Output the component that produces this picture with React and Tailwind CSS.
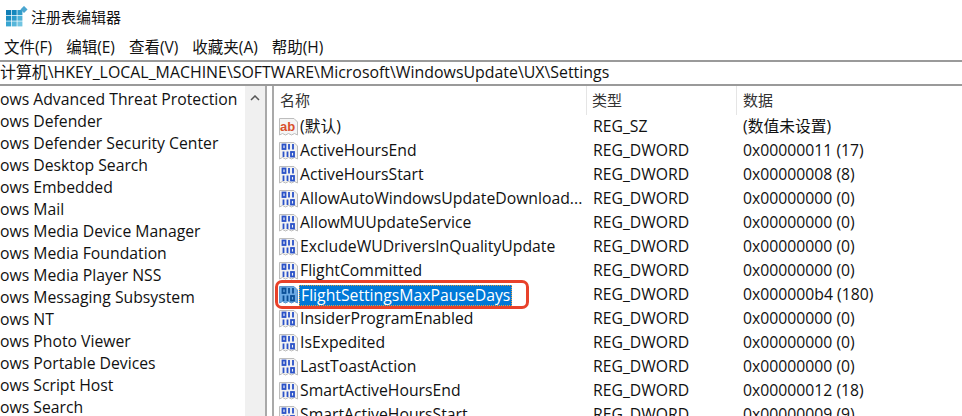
const FONT = "font-['Open_Sans','Noto_Sans_CJK_SC',sans-serif]"

const treeItems = [
  'ows Advanced Threat Protection',
  'ows Defender',
  'ows Defender Security Center',
  'ows Desktop Search',
  'ows Embedded',
  'ows Mail',
  'ows Media Device Manager',
  'ows Media Foundation',
  'ows Media Player NSS',
  'ows Messaging Subsystem',
  'ows NT',
  'ows Photo Viewer',
  'ows Portable Devices',
  'ows Script Host',
  'ows Search',
]

const values = [
  { name: '(默认)', type: 'REG_SZ', data: '(数值未设置)', icon: 'sz' },
  { name: 'ActiveHoursEnd', type: 'REG_DWORD', data: '0x00000011 (17)' },
  { name: 'ActiveHoursStart', type: 'REG_DWORD', data: '0x00000008 (8)' },
  { name: 'AllowAutoWindowsUpdateDownload...', type: 'REG_DWORD', data: '0x00000000 (0)' },
  { name: 'AllowMUUpdateService', type: 'REG_DWORD', data: '0x00000000 (0)' },
  { name: 'ExcludeWUDriversInQualityUpdate', type: 'REG_DWORD', data: '0x00000000 (0)' },
  { name: 'FlightCommitted', type: 'REG_DWORD', data: '0x00000000 (0)' },
  { name: 'FlightSettingsMaxPauseDays', type: 'REG_DWORD', data: '0x000000b4 (180)', selected: true },
  { name: 'InsiderProgramEnabled', type: 'REG_DWORD', data: '0x00000000 (0)' },
  { name: 'IsExpedited', type: 'REG_DWORD', data: '0x00000000 (0)' },
  { name: 'LastToastAction', type: 'REG_DWORD', data: '0x00000000 (0)' },
  { name: 'SmartActiveHoursEnd', type: 'REG_DWORD', data: '0x00000012 (18)' },
  { name: 'SmartActiveHoursStart', type: 'REG_DWORD', data: '0x00000009 (9)' },
]

function AppIcon() {
  const cells = [
    ['#0f7db5', '#1487bd', '#2f9cca'],
    ['#1a8cc0', '#2c9bcb', '#4fb2d8'],
    ['#38a5d1', '#56b6da', '#72c5e2'],
  ]
  return (
    <svg width="24" height="24" viewBox="0 0 24 24">
      {cells.map((row, r) =>
        row.map((fill, c) => (
          <rect key={`${r}-${c}`} x={c * 5.7} y={4 + r * 5.7} width="5" height="5" fill={fill} />
        ))
      )}
      <rect x="15.500" y="1" width="5" height="5" fill="#4aa6d0" transform="rotate(45 18 3.500)" />
    </svg>
  )
}

function ValueIcon({ kind, selected }) {
  if (kind === 'sz') {
    return (
      <svg width="20" height="20" viewBox="0 0 20 20" className="shrink-0">
        <path d="M.5 1.500h14.500l3.500 3.500v13l-3-1.500-3 1.500-3-1.500-3 1.500-3-1.500-3 1.500z" fill="#f5f5f5" stroke="#bdbdbd" />
        <text x="1" y="14" fontSize="13" fontWeight="700" fill="#d9502f" fontFamily="Liberation Sans, sans-serif">ab</text>
      </svg>
    )
  }
  const c = selected ? '#0b4f96' : '#2a52c8'
  return (
    <svg width="20" height="20" viewBox="0 0 20 20" className="shrink-0">
      <path d="M.5 1.500h14.500l3.500 3.500v13l-3-1.500-3 1.500-3-1.500-3 1.500-3-1.500-3 1.500z" fill={selected ? '#6aa9e4' : '#f2f2f2'} stroke={selected ? '#5b94cc' : '#bdbdbd'} />
      <g fill="none" stroke={c} strokeWidth="1.800">
        <rect x="3.500" y="3.500" width="3" height="4.500" />
        <path d="M10 3v5.500M14 3v5.500" />
        <path d="M4.500 10.500v5.500M8.500 10.500v5.500" />
        <rect x="12" y="11" width="3" height="4.500" />
      </g>
    </svg>
  )
}

export default function App() {
  return (
    <div className={`${FONT} w-[962px] h-[416px] overflow-hidden bg-white text-[15.75px] text-[#111] flex flex-col`}>
      <div className="h-[35px] flex items-center pl-[6px] gap-[1px] shrink-0">
        <AppIcon />
        <span className="text-[15px]">注册表编辑器</span>
      </div>

      <div className="h-[25px] flex items-center gap-[14px] pl-[4px] text-[15.5px] shrink-0">
        <span>文件(F)</span>
        <span>编辑(E)</span>
        <span>查看(V)</span>
        <span>收藏夹(A)</span>
        <span>帮助(H)</span>
      </div>

      <div className="h-[26px] shrink-0 border-y-2 border-[#9a9a9a] flex items-center text-[15.9px] whitespace-nowrap">
        计算机\HKEY_LOCAL_MACHINE\SOFTWARE\Microsoft\WindowsUpdate\UX\Settings
      </div>

      <div className="flex-1 flex min-h-0">
        <div className="w-[245px] shrink-0 pt-[2px] overflow-hidden">
          {treeItems.map((t) => (
            <div key={t} className="h-[22px] leading-[22px] whitespace-nowrap">{t}</div>
          ))}
        </div>

        <div className="w-[20px] shrink-0 bg-[#f0f0f0] flex justify-center pt-[9px]">
          <svg width="10" height="6" viewBox="0 0 10 6">
            <path d="M1 5l4-4 4 4" fill="none" stroke="#555" strokeWidth="1.500" />
          </svg>
        </div>

        <div className="w-[7px] shrink-0 border-l-2 border-[#a9a9a9] bg-white" />

        <div className="flex-1 min-w-0 border-l-2 border-[#a9a9a9] pl-[4px]">
          <div className="h-[29px] flex items-center text-[15px] text-[#333]">
            <div className="w-[308px] pl-[2px]">名称</div>
            <div className="w-[150px] pl-[5px] border-l border-[#e5e5e5] h-full flex items-center">类型</div>
            <div className="pl-[6px] border-l border-[#e5e5e5] h-full flex items-center">数据</div>
          </div>
          {values.map((v) => (
            <div key={v.name} className="relative h-[24px] pl-[1px] flex items-center whitespace-nowrap">
              <div className="w-[314px] flex items-center gap-[1px] overflow-hidden">
                <ValueIcon kind={v.icon} selected={v.selected} />
                {v.selected ? (
                  <span className="bg-[#0078d7] text-white border border-dotted border-[#e59b3c] h-[21px] leading-[19px] -ml-[1px] px-[1px]">
                    {v.name}
                  </span>
                ) : (
                  <span>{v.name}</span>
                )}
              </div>
              <div className="w-[150px]">{v.type}</div>
              <div>{v.data}</div>
              {v.selected && (
                <span className="absolute left-[-3px] top-[-3px] w-[254px] h-[29px] border-[3px] border-[#e8412a] rounded-[7px]" />
              )}
            </div>
          ))}
        </div>
      </div>
    </div>
  )
}
